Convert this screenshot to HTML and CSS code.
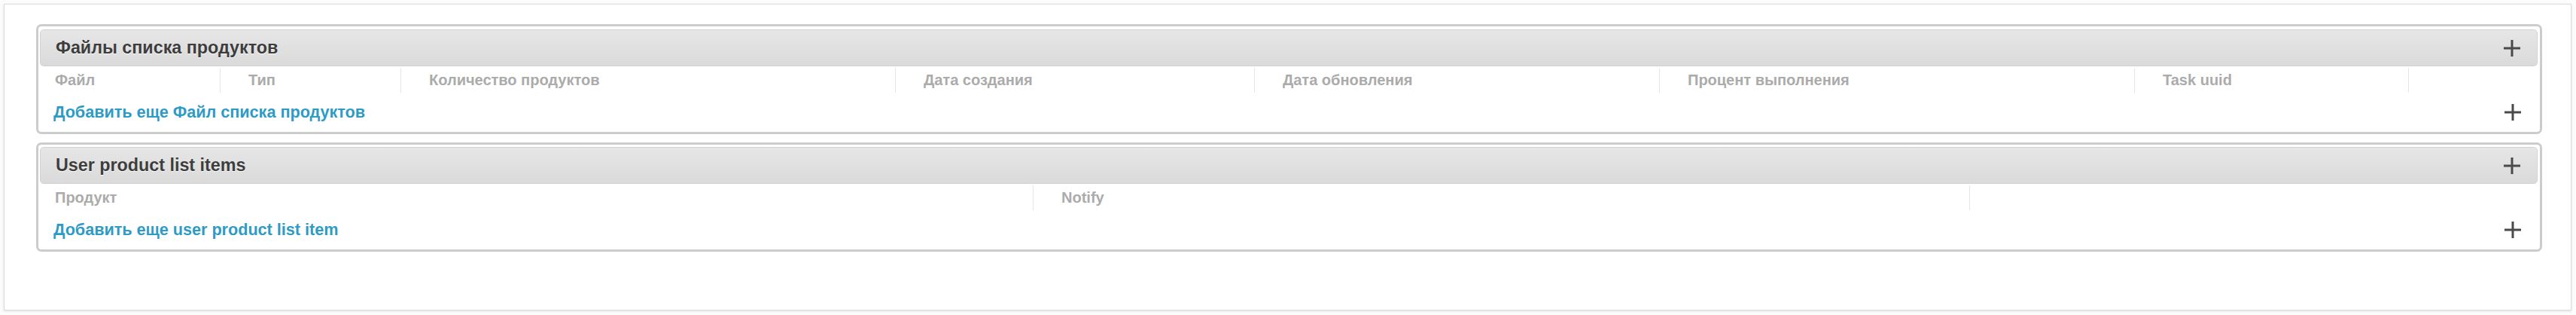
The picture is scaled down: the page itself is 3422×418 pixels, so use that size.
FILE: index.html
```html
<!DOCTYPE html>
<html lang="ru">
<head>
<meta charset="utf-8">
<title>Inline groups</title>
<link rel="stylesheet" href="styles.css">
</head>
<body>
<div class="panel">
  <section class="group group-first">
    <div class="group-head">
      <h2 class="group-title">Файлы списка продуктов</h2>
      <span class="plus"><svg viewBox="0 0 22 22" width="22" height="22"><rect x="9.5" y="0" width="3" height="22" fill="#4a4a4a"/><rect x="0" y="9.5" width="22" height="3" fill="#4a4a4a"/></svg></span>
    </div>
    <div class="cols cols-files">
      <div class="col col-first">Файл</div>
      <div class="col">Тип</div>
      <div class="col">Количество продуктов</div>
      <div class="col">Дата создания</div>
      <div class="col">Дата обновления</div>
      <div class="col">Процент выполнения</div>
      <div class="col">Task uuid</div>
      <div class="col"></div>
    </div>
    <div class="add-row">
      <a class="add-link" href="#">Добавить еще Файл списка продуктов</a>
      <span class="plus"><svg viewBox="0 0 22 22" width="22" height="22"><rect x="9.5" y="0" width="3" height="22" fill="#4a4a4a"/><rect x="0" y="9.5" width="22" height="3" fill="#4a4a4a"/></svg></span>
    </div>
  </section>
  <section class="group group-second">
    <div class="group-head">
      <h2 class="group-title">User product list items</h2>
      <span class="plus"><svg viewBox="0 0 22 22" width="22" height="22"><rect x="9.5" y="0" width="3" height="22" fill="#4a4a4a"/><rect x="0" y="9.5" width="22" height="3" fill="#4a4a4a"/></svg></span>
    </div>
    <div class="cols cols-items">
      <div class="col col-first">Продукт</div>
      <div class="col">Notify</div>
      <div class="col"></div>
    </div>
    <div class="add-row">
      <a class="add-link" href="#">Добавить еще user product list item</a>
      <span class="plus"><svg viewBox="0 0 22 22" width="22" height="22"><rect x="9.5" y="0" width="3" height="22" fill="#4a4a4a"/><rect x="0" y="9.5" width="22" height="3" fill="#4a4a4a"/></svg></span>
    </div>
  </section>
</div>
</body>
</html>
```
FILE: styles.css
```css
* { box-sizing: border-box; }
html, body { margin: 0; background: #fcfcfc; }
body {
  padding: 5px 6px 6px 5px;
  font-family: "Liberation Sans", Arial, sans-serif;
}
.panel {
  background: #fff;
  border: 1px solid #dcdcdc;
  box-shadow: 0 1px 3px rgba(0,0,0,0.12);
  padding: 26px 38px 77px 42px;
  display: flex;
  flex-direction: column;
  gap: 11px;
}
.group {
  border: 3px solid #cccccc;
  border-radius: 7px;
  padding: 4px 3px 0 2px;
  display: flex;
  flex-direction: column;
}
.group-second { padding-top: 3px; }
.group-head {
  height: 49px;
  display: flex;
  align-items: center;
  justify-content: space-between;
  padding: 0 22px 0 20px;
  background: linear-gradient(#e6e6e6, #dadada);
  border: 1px solid #d2d2d2;
  border-radius: 5px;
}
.group-title {
  margin: 0;
  font-size: 23.3px;
  font-weight: bold;
  color: #3d3d3d;
  text-shadow: 0 1px 0 #fff;
}
.plus { display: flex; width: 22px; height: 22px; }
.plus svg { display: block; }
.cols {
  margin-top: 2px;
  height: 33px;
  display: grid;
}
.cols-files { grid-template-columns: 239px 240px 657px 477px 538px 631px 364px 1fr; }
.cols-items { grid-template-columns: 1319px 1244px 1fr; }
.col {
  border-left: 1px solid #e6e6e6;
  padding-left: 37px;
  display: flex;
  align-items: center;
  font-size: 20px;
  font-weight: bold;
  color: #ababab;
  white-space: nowrap;
}
.col.col-first { border-left: none; padding-left: 20px; }
.add-row {
  height: 52px;
  display: flex;
  align-items: center;
  justify-content: space-between;
  padding: 0 22px 0 18px;
}
.add-link {
  font-size: 21.6px;
  font-weight: bold;
  color: #2e9bc6;
  text-decoration: none;
}
```
